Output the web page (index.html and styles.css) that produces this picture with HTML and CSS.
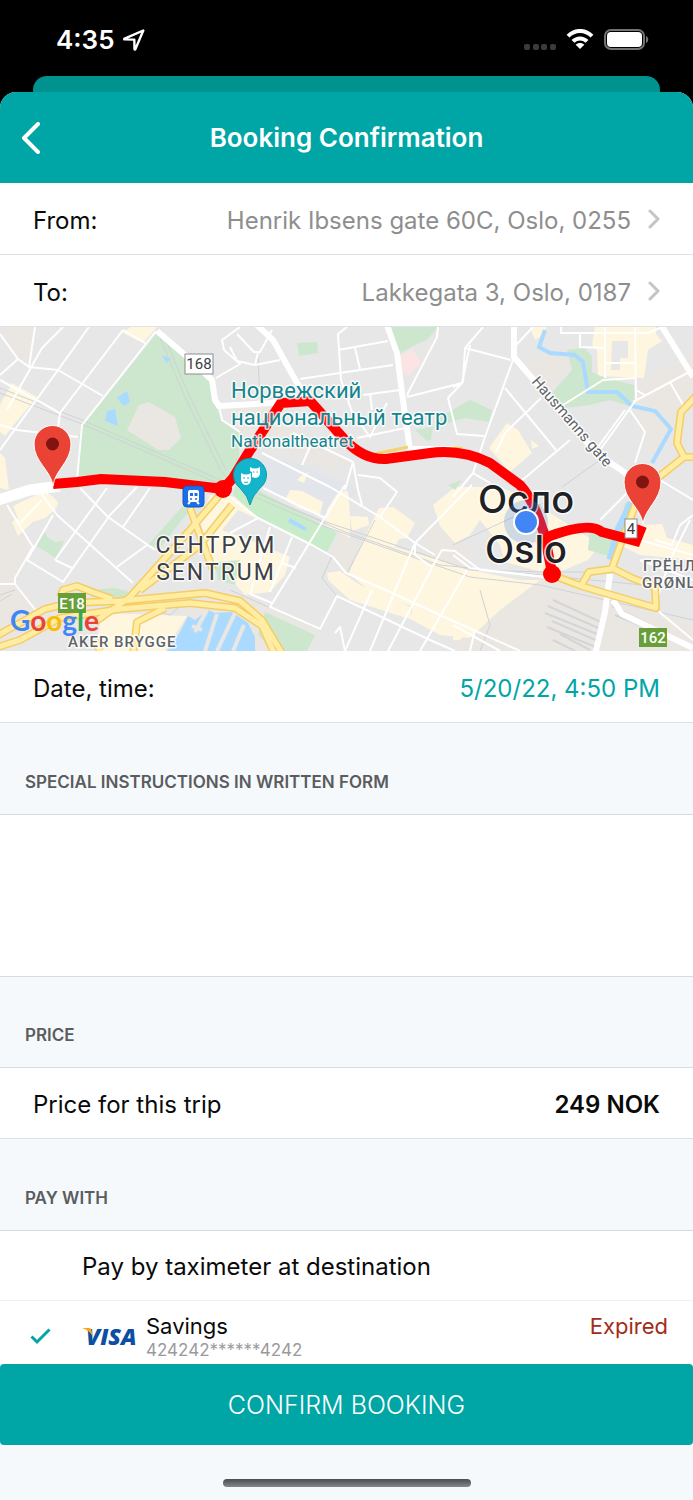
FILE: index.html
```html
<!DOCTYPE html>
<html lang="en">
<head>
    <meta charset="UTF-8">
    <meta name="viewport" content="width=device-width, initial-scale=1.0">
    <title>Booking Confirmation</title>
    <link rel="stylesheet" href="styles.css">
</head>
<body>
    <div class="status-bar">
        <div class="status-left">
            <span>4:35</span>
            <svg width="22" height="22" viewBox="0 0 22 22" fill="none" stroke="#fff" stroke-width="2.4" stroke-linejoin="round">
                <path d="M20.300 1.500L1.600 9.600C1 9.900 1.200 10.400 1.700 10.400L11.300 10.600L11.500 20C11.500 20.600 12.100 20.700 12.400 20.100Z"/>
            </svg>
        </div>
        <div class="status-right">
            <svg width="32" height="7" viewBox="0 0 32 7" fill="#3b3b3d">
                <rect x="0" width="6" height="6" rx="2"/>
                <rect x="9" width="6" height="6" rx="2"/>
                <rect x="17" width="6" height="6" rx="2"/>
                <rect x="26" width="6" height="6" rx="2"/>
            </svg>
            <svg class="wifi" width="28" height="22" viewBox="0 0 28 22" fill="none" stroke="#fff" stroke-width="4">
                <path d="M2 7.200C8.800 .2 19.200 .2 26 7.200"/>
                <path d="M7 12.400C11 8.400 17 8.400 21 12.400"/>
                <path d="M14 20L9.700 15.800C12 13.400 16 13.400 18.300 15.800Z" fill="#fff" stroke="none"/>
            </svg>
            <svg width="45" height="22" viewBox="0 0 45 22">
                <rect x="1" y="1" width="39" height="19" rx="6" fill="none" stroke="#747276" stroke-width="2"/>
                <rect x="3" y="3" width="35" height="15" rx="4" fill="#fff"/>
                <path d="M42 7C45 8 45 13 42 14Z" fill="#747276"/>
            </svg>
        </div>
    </div>
    <div class="sheet-back"></div>
    <div class="sheet">
        <header class="nav-bar">
            <button class="back" type="button" aria-label="Back">
                <svg width="20" height="32" viewBox="0 0 20 32" fill="none" stroke="#fff" stroke-width="4" stroke-linecap="round" stroke-linejoin="round">
                    <path d="M18 2L4 16L18 30"/>
                </svg>
            </button>
            <h1>Booking Confirmation</h1>
        </header>

        <main>
            <a class="row" href="#from">
                <span>From:</span>
                <span class="value">Henrik Ibsens gate 60C, Oslo, 0255</span>
                <svg class="chevron" width="13" height="20" viewBox="0 0 13 20"><path d="M3 2L11 10L3 18"/></svg>
            </a>
            <a class="row" href="#to">
                <span>To:</span>
                <span class="value">Lakkegata 3, Oslo, 0187</span>
                <svg class="chevron" width="13" height="20" viewBox="0 0 13 20"><path d="M3 2L11 10L3 18"/></svg>
            </a>

            <svg class="map" viewBox="0 327 693 324">
                <rect y="327" width="693" height="324" fill="#e7e7e7"/>

                <!-- plain ground -->
                <g fill="#eae7e3">
                    <path d="M3 327H35L29 367L18 359Z"/>
                    <path d="M0 505L12 505L33 547L15 580L50 620L0 651Z"/>
                    <path d="M219 405L262 400L300 432L352 462L330 470L240 432Z"/>
                    <path d="M453 580L545 577L610 590L693 625V651H453Z"/>
                    <path d="M340 532L360 545L346 574L332 556Z"/>
                    <path d="M560 350L570 370L541 395L522 365Z"/>
                    <path d="M638 380L693 355V400L672 428L652 463L632 408Z"/>
                    <path d="M185 600L260 600L320 628L310 651H180Z"/>
                    <path d="M413 376L427 345L438 335L407 395Z"/>
                    <path d="M420 520L470 545L465 572L430 560Z"/>
                </g>
                <path d="M262 455L302 465L360 490L345 500L330 520L258 488Z" fill="#e2e6ea"/>

                <!-- business areas -->
                <g fill="#fef6df">
                    <path d="M123 333L130 327H157L143 343Z"/>
                    <path d="M12 383L37 397L22 415L5 436L0 432V405Z"/>
                    <path d="M0 453L5 458L9 490L0 488Z"/>
                    <path d="M13 506L45 491L52 496L58 502L56 509L45 518L33 522L18 536L12 522L18 518Z"/>
                    <path d="M530 327H547L540 337L535 340Z"/>
                    <path d="M595 327H656V334L662 341L648 350L644 378L598 376L597 350L592 345Z"/>
                    <path d="M507 423L518 430L532 453L510 472L489 448Z"/>
                    <path d="M531 440L539 446L532 449Z"/>
                    <path d="M210 495L240 497L264 508L260 520L238 510L222 530L245 538L290 557L285 575L270 592L245 595L225 572L212 565L200 520Z"/>
                    <path d="M285 500L290 490L302 491L323 502L320 515L298 508Z"/>
                    <path d="M327 510L338 492L348 491L350 516L350 538L325 525Z"/>
                    <path d="M350 516L368 517L369 525L352 531Z"/>
                    <path d="M379 508L393 507L403 514L415 523L407 538L399 539L395 547L405 550L470 570L520 580L540 580L500 610L470 638L440 635L412 620L412 606L375 596L349 573L368 530Z"/>
                    <path d="M327 573L340 571L360 585L410 607L413 620L350 600L328 580Z"/>
                    <path d="M433 505L455 487H500L530 500L600 545L588 560L552 575L505 562L500 545L480 520L470 535L455 543L440 526Z"/>
                    <path d="M301 476L308 472L304 483L297 480Z"/>
                    <path d="M640 525L662 524L667 538L693 545V560L640 555L620 545Z"/>
                    <path d="M102 613L187 616L165 651H95Z"/>
                    <path d="M453 580L480 590L490 600L480 620L460 640L453 640Z"/>
                </g>
                <path d="M612 341H628V358H620V370H611Z" fill="#e7e7e7"/>

                <!-- parks -->
                <g fill="#cce7cd">
                    <path d="M157 333L190 360L213 385L216 407L222 421L240 434L238 470L222 485L100 478L77 475L80 430L82 427Z"/>
                    <path d="M297 343L317 342L318 353L299 356Z"/>
                    <path d="M391 327H438L427 340L413 346L399 354Z"/>
                    <path d="M438 418L452 410L470 400L492 410L489 422L465 418L440 425Z"/>
                    <path d="M415 430L433 427L431 440L427 441Z"/>
                    <path d="M567 350L585 348L592 357L592 372L605 378L634 385L635 408L610 400L590 405L563 408L550 395L572 370Z"/>
                    <path d="M35 545L45 532L48 538L55 542L64 541L56 558Z"/>
                    <path d="M148 545L182 507L192 507L160 548Z"/>
                    <path d="M92 590L115 588L133 593L120 598L92 597Z"/>
                    <path d="M215 562L240 560L235 585L218 580Z"/>
                    <path d="M265 612L315 635L307 651H275L258 635Z"/>
                    <path d="M590 530L612 540L608 556L588 550Z"/>
                    <path d="M625 503L636 500L630 520L620 528Z"/>
                    <path d="M448 485L462 480L455 490Z"/>
                </g>
                <path d="M240 470L258 490L337 533L327 552L260 520L233 495Z" fill="#c8ecc9"/>
                <path d="M400 356L412 349L421 363L408 376L400 370Z" fill="#fce4e4"/>
                <path d="M149 402L175 417L181 438L169 450H158L127 430L139 405Z" fill="#eae7e3"/>

                <!-- water -->
                <g fill="#aadaff">
                    <path d="M162 355L171 359L166 363Z"/>
                    <path d="M127 391L130 402L124 406L117 398Z"/>
                    <path d="M115 409L118 426L105 421L107 411Z"/>
                    <path d="M290 518L307 528L305 531L288 522Z"/>
                    <path d="M188 616L195 620L208 610L215 613L232 612L248 623L255 637V651H167L180 632Z"/>
                </g>
                <path d="M545 330L539 347L550 353L575 355L583 362L588 392H617L632 406L655 411L671 429L652 463" fill="none" stroke="#aadaff" stroke-width="4"/>
                <path d="M632 503L619 530L611 560" fill="none" stroke="#aadaff" stroke-width="9"/>
                <path d="M195 632L207 610M205 651L217 614M217 651L235 613M233 651L244 625M192 626L202 630" stroke="#eae7e3" stroke-width="4"/>

                <!-- rail lines -->
                <g fill="none" stroke="#cfd2d5">
                    <path d="M0 388L82 420L225 482M0 393L82 424L220 484"/>
                    <path d="M160 338L184 395L222 473L245 490M165 338L188 393L226 470"/>
                    <path d="M245 488L320 520L470 570L545 572H590M245 493L320 525L470 577L540 585L693 620M250 490L340 530L440 565L693 590"/>
                    <path d="M258 357L260 400M375 520L346 575M332 556L322 578L336 595M562 487L600 460M550 500L453 545M480 590L490 625L480 651"/>
                    <path d="M230 590L320 630M120 600L170 615L200 590L240 600"/>
                    <path d="M0 595L15 590M0 601L12 594"/>
                </g>
                <g fill="none" stroke="#d3d5d8" stroke-width="2">
                    <path d="M553 600L605 624M548 606L603 630M545 613L602 636M552 621L600 642M547 627L598 648M560 634L590 650M553 640L575 651M612 606L650 625M615 615L693 648"/>
                </g>

                <!-- streets -->
                <g class="street">
                    <path d="M0 334L18 359L29 367L58 370L103 396M35 327L29 367M63 327L42 348L7 410M89 327L58 370L0 450M123 330L60 413L58 427M0 380L60 413M0 425L17 430L78 437M18 359L0 375M123 330L145 343"/>
                    <path d="M156 331L82 425L77 480"/>
                    <path d="M240 327L222 340L224 350L240 364L216 378M219 405L222 420L240 432"/>
                    <path d="M230 347L237 361L255 365L280 360M237 334L254 352H260L272 330M255 365L258 352"/>
                    <path d="M347 327L338 334L341 380L352 412L370 437L387 403M300 379L393 365M338 350L388 341M355 348L360 369M363 395L400 390M370 393L372 410M357 438L410 427"/>
                    <path d="M438 327L437 337L407 395M407 397L462 383L470 345M462 383L448 398L457 434L484 436"/>
                    <path d="M293 433L353 462L358 490L362 505M353 462L345 490M262 453L302 473L330 487M358 475L380 478L397 492L380 517M313 440L302 465"/>
                    <path d="M483 327L465 348L511 360M465 348L463 382L453 387M513 360L485 437L473 473L453 497M505 388L556 450M541 398L505 433L496 452M563 405L603 380L635 378M570 440L520 482M516 345L533 327"/>
                    <path d="M561 327V333H648L660 328M580 333V347L605 348M605 327V378M635 327L636 400L600 450M605 363H635M625 410L598 447M633 402L693 370M670 382L683 405M630 410L645 432L635 463M636 390L645 395"/>
                    <path d="M473 473L490 483M660 480L693 500M600 520L640 480"/>
                    <path d="M7 505L33 547L15 578V584L37 612M0 584H15M40 492L57 515L133 583M53 515L27 560L63 582L110 515L137 487M55 560L72 568M55 560L107 488M80 488L108 517L155 550M117 567L147 545M123 527L150 488M20 523L42 500"/>
                    <path d="M230 497L258 518L312 545L333 557L346 573L390 592L440 615L520 651M263 488L325 518M345 485L270 607L320 629L337 596L430 640L455 651M330 487L380 517L415 543L435 555M472 485L415 543L370 651M432 568L388 651M372 590L345 651M467 570L420 651M415 543V555L432 567L442 550L455 551L480 570L545 577M230 533L258 518M270 527L250 594M292 537L270 592M282 563L296 568M250 594L272 603M335 633L340 627L345 651"/>
                    <path d="M453 555L470 568L545 577M657 610L693 640M640 560L693 580M690 520L670 560L655 605M640 540L693 555M655 540L672 545L680 525L693 515M453 625L500 651M475 630L470 651"/>
                </g>
                <g class="main-road">
                    <path d="M157 331L185 355L212 380L215 400L219 406L290 402"/>
                    <path d="M257 325L273 340L297 383L310 402"/>
                    <path d="M387 325L397 353L402 393L410 450"/>
                    <path d="M514 325V357L596 453L640 483"/>
                    <path d="M661 325L693 377"/>
                    <path d="M408 449L455 449"/>
                    <path d="M610 574L605 612L595 655"/>
                    <path d="M613 600L622 614L693 648"/>
                </g>
                <path d="M-5 501L30 490L60 486" fill="none" stroke="#fff" stroke-width="11"/>

                <!-- highways: dark edge first, then the fill -->
                <g class="highway-edge">
                    <path id="highway-west" d="M-5 637L45 609L70 603L120 601L205 593L240 601L262 620L283 655M-5 648L20 640L60 618L120 609L190 603L235 608L262 626L275 655"/>
                    <path id="highway-diagonal" d="M95 622L130 597L190 530L224 490M190 508L198 530L213 570M140 590L200 545L232 505M60 597L63 590L77 586L95 593L112 599M100 651L95 640M133 655L137 622L165 608"/>
                    <path id="highway-east" d="M700 392L681 412L677 443L684 457H700M684 457L640 492L612 568L632 578L655 587L656 608L581 586L552 575M581 586L589 572L612 569"/>
                </g>
                <g class="highway">
                    <use href="#highway-west"/>
                    <use href="#highway-diagonal"/>
                    <use href="#highway-east"/>
                </g>
                <path d="M375 454L408 447M434 449L462 448" stroke="#f7d16b" stroke-width="3"/>

                <!-- route -->
                <g class="route">
                    <path d="M53 484L77 482L101 479L165 482L223 489L233 478L247 455L281 403L310 401L345 440Q364 460 386 459L430 453Q462 449 490 463L520 485Q534 500 545 537L552 573"/>
                    <path d="M545 538Q588 521 602 532L636 541L642 526"/>
                </g>
                <circle cx="223" cy="489" r="9" fill="#f00"/>
                <circle cx="552" cy="574" r="9" fill="#f00"/>

                <!-- road shields -->
                <rect x="185" y="354" width="28" height="20" fill="#fff" stroke="#8b8d90"/>
                <text class="shield dark" x="199" y="369">168</text>
                <rect x="625" y="519" width="12" height="19" fill="#fff" stroke="#8b8d90"/>
                <text class="shield dark" x="631" y="534">4</text>
                <rect x="58" y="593" width="28" height="20" fill="#689f38"/>
                <text class="shield" x="72" y="609">E18</text>
                <rect x="639" y="628" width="28" height="19" fill="#689f38"/>
                <text class="shield" x="653" y="643">162</text>

                <!-- station -->
                <rect x="183" y="486" width="21" height="21" rx="4" fill="#1a6fe8" stroke="#1558c0"/>
                <path d="M190 490H197Q199 490 199 492V500Q199 502 197 502H190Q188 502 188 500V492Q188 490 190 490ZM190 493V496H193V493ZM194.500 493V496H197.500V493Z" fill="#fff" fill-rule="evenodd"/>
                <path d="M190 502L188 504M197 502L199 504" stroke="#fff" stroke-width="2"/>
                <circle cx="191" cy="499" r="1" fill="#1a6fe8"/>
                <circle cx="196" cy="499" r="1" fill="#1a6fe8"/>

                <!-- theatre -->
                <path d="M250 505Q248 496 240 488A16.500 16.500 0 1 1 260 488Q252 496 250 505Z" fill="#12b5cb" stroke="#0e98ac"/>
                <path d="M241 473Q246 476 251 473V480Q250 485 246 485Q242 485 241 480Z" fill="#fff"/>
                <path d="M250 467Q255 470 260 467V474Q259 478 255 478L252 477V472L250 471Z" fill="#fff"/>
                <path d="M243 478H245M247 478H249M253 472H254.500M256.500 472H258M244 482Q246 483 248 482" stroke="#12b5cb" fill="none"/>

                <!-- place names -->
                <text class="label poi" x="231" y="398">Норвежский</text>
                <text class="label poi" x="231" y="425">национальный театр</text>
                <text class="label poi small" x="231" y="447">Nationaltheatret</text>
                <text class="label district" x="216" y="553">СЕНТРУМ</text>
                <text class="label district" x="216" y="580">SENTRUM</text>
                <text class="label area" x="68" y="647">AKER BRYGGE</text>
                <text class="label area" x="643" y="571">ГРЁНЛАНД</text>
                <text class="label area" x="642" y="588">GRØNLAND</text>
                <text class="label road" transform="translate(531 382) rotate(49)">Hausmanns gate</text>
                <text class="label city" x="526" y="513">Осло</text>
                <circle cx="526" cy="522" r="22" fill="#4285f4" opacity="0.25"/>
                <text class="label city" x="526" y="563">Oslo</text>
                <circle cx="526" cy="522" r="12" fill="#4285f4" stroke="#fff" stroke-width="2"/>

                <!-- markers -->
                <g id="marker">
                    <path d="M53 486C51 470 34 462 34 444A18.500 18.500 0 0 1 71 444C71 462 55 470 53 486Z" fill="#ea4335" stroke="#fff"/>
                    <circle cx="52.500" cy="444" r="6.500" fill="#811411"/>
                </g>
                <use href="#marker" x="590" y="38"/>

                <text class="google" x="10" y="631"><tspan fill="#4285f4">G</tspan><tspan fill="#ea4335">o</tspan><tspan fill="#fbbc05">o</tspan><tspan fill="#4285f4">g</tspan><tspan fill="#34a853">l</tspan><tspan fill="#ea4335">e</tspan></text>
            </svg>

            <div class="row">
                <span>Date, time:</span>
                <span class="value date">5/20/22, 4:50 PM</span>
            </div>

            <label class="section-title" for="instructions">SPECIAL INSTRUCTIONS IN WRITTEN FORM</label>
            <textarea class="instructions" id="instructions"></textarea>

            <h2 class="section-title">PRICE</h2>
            <div class="row price-row">
                <span>Price for this trip</span>
                <span class="value price">249 NOK</span>
            </div>

            <h2 class="section-title">PAY WITH</h2>
            <label class="row pay">
                <input type="radio" name="pay">
                <span>Pay by taximeter at destination</span>
            </label>
            <label class="card">
                <input type="radio" name="pay" checked>
                <svg class="check" width="21" height="17" viewBox="0 0 21 17" fill="none" stroke="#00a6a6" stroke-width="3"><path d="M1.500 8.500L7 14L19.500 1.500"/></svg>
                <svg class="visa" width="58" height="20" viewBox="0 0 58 20">
                    <text x="4" y="18">VISA</text>
                    <path d="M0 1H7Q9 1 9.500 3L10.500 9Q7 3 0 1Z" fill="#f9a51a"/>
                </svg>
                <span class="card-info">
                    <span class="card-name">Savings</span>
                    <span class="card-number">424242******4242</span>
                </span>
                <span class="expired">Expired</span>
            </label>
        </main>

        <footer>
            <button class="confirm" type="button">CONFIRM BOOKING</button>
            <div class="home-indicator"></div>
        </footer>
    </div>
</body>
</html>
```
FILE: styles.css
```css
* {
    box-sizing: border-box;
}
body {
    margin: 0;
    background: #000;
    color: #0a0a0a;
    font-family: Inter, "Noto Sans", sans-serif;
    font-size: 24px;
    line-height: 30px;
}

/* Status bar */
.status-bar {
    display: flex;
    align-items: center;
    justify-content: space-between;
    height: 76px;
    padding: 4px 44px 0 56px;
    color: #fff;
}
.status-left,
.status-right {
    display: flex;
    align-items: center;
    gap: 8px;
}
.status-left {
    font-size: 26px;
    font-weight: 600;
}
.status-right {
    align-items: flex-end;
    gap: 10px;
}

/* Sheets */
.sheet-back {
    height: 16px;
    margin: 0 33px;
    background: #00928f;
    border-radius: 14px 14px 0 0;
}
.sheet {
    background: #f5f9fb;
    border-radius: 16px 16px 0 0;
    overflow: hidden;
}
.nav-bar {
    display: grid;
    grid-template-columns: 60px 1fr 60px;
    align-items: center;
    height: 91px;
    background: #00a6a6;
    color: #fff;
}
.nav-bar h1 {
    margin: 0;
    text-align: center;
    font-size: 26px;
    font-weight: 600;
}
.back {
    display: flex;
    padding: 0 0 0 20px;
    border: none;
    background: none;
}

/* Rows */
.row {
    display: flex;
    align-items: center;
    height: 72px;
    padding: 4px 33px 0;
    background: #fff;
    border-bottom: 1px solid #dfe1e2;
    color: inherit;
    text-decoration: none;
}
.value {
    flex: 1;
    text-align: right;
    color: #8e8e8e;
}
.chevron {
    margin: 0 0 4px 16px;
    fill: none;
    stroke: #c4c4c6;
    stroke-width: 3;
    stroke-linecap: round;
    stroke-linejoin: round;
}
.date {
    color: #00a6a6;
}
.price-row {
    height: 71px;
}
.price {
    color: #0a0a0a;
    font-weight: 600;
}
.section-title {
    display: flex;
    align-items: flex-end;
    height: 92px;
    margin: 0;
    padding: 0 25px 22px;
    border-bottom: 1px solid #d9dcde;
    color: #5a5c5e;
    font-size: 17px;
    font-weight: 600;
    line-height: 20px;
}
.instructions {
    display: block;
    width: 100%;
    height: 162px;
    padding: 16px 33px;
    border: none;
    border-bottom: 1px solid #d9dcde;
    background: #fff;
    font: inherit;
    resize: none;
}
.instructions + .section-title {
    height: 91px;
}

/* Map */
.map {
    display: block;
    width: 100%;
    height: auto;
}
.street,
.main-road,
.highway,
.highway-edge,
.route {
    fill: none;
    stroke: #fff;
    stroke-linejoin: round;
}
.street {
    stroke-width: 2;
}
.main-road {
    stroke-width: 6;
}
.highway {
    stroke: #ffeda3;
    stroke-width: 5;
}
.highway-edge {
    stroke: #f6cd65;
    stroke-width: 8;
}
.route {
    stroke: #f00;
    stroke-width: 10;
    stroke-linejoin: miter;
}
.label {
    fill: #5f6368;
    stroke: #fff;
    stroke-width: 3;
    stroke-linejoin: round;
    stroke-opacity: 0.8;
    paint-order: stroke;
    font-family: Roboto, sans-serif;
}
.poi {
    fill: #12858e;
    font-size: 22px;
}
.small {
    font-size: 17px;
}
.district {
    fill: #3c4043;
    font-size: 23px;
    letter-spacing: 2px;
    text-anchor: middle;
}
.area {
    font-size: 15px;
    font-weight: 500;
    letter-spacing: 1px;
}
.road {
    font-size: 15px;
}
.city {
    fill: #202124;
    font-family: Inter, sans-serif;
    font-size: 38px;
    font-weight: 500;
    text-anchor: middle;
}
.shield {
    fill: #fff;
    font-family: Roboto, sans-serif;
    font-size: 15px;
    font-weight: 500;
    text-anchor: middle;
}
.shield.dark {
    fill: #3c4043;
    font-weight: 400;
}
.google {
    font-family: Lato, sans-serif;
    font-size: 28px;
    font-weight: 700;
}

/* Payment */
.pay input,
.card input {
    appearance: none;
    width: 0;
    height: 0;
    margin: 0;
}
.pay {
    height: 70px;
    padding: 2px 33px 0 82px;
    border-color: #f0f0f0;
}
.card {
    display: flex;
    align-items: center;
    height: 63px;
    padding: 0 25px 0 30px;
    background: #fff;
}
.check {
    margin: 8px 31px 0 0;
}
.visa {
    margin: 8px 6px 0 0;
}
.visa text {
    fill: #0b4ea2;
    font-family: "Open Sans", sans-serif;
    font-size: 23px;
    font-style: italic;
    font-weight: 800;
}
.card-info {
    display: flex;
    flex: 1;
    flex-direction: column;
    padding-top: 8px;
}
.card-name,
.expired {
    font-size: 22px;
    line-height: 26px;
}
.card-number {
    color: #9a9a9c;
    font-size: 17px;
    line-height: 22px;
}
.expired {
    align-self: flex-start;
    padding-top: 12px;
    color: #a32c18;
}

/* Footer */
.confirm {
    display: block;
    width: 100%;
    height: 81px;
    border: none;
    border-radius: 4px;
    background: #00a6a6;
    color: #fff;
    font-family: inherit;
    font-size: 25px;
    font-weight: 300;
}
.home-indicator {
    width: 248px;
    height: 8px;
    margin: 34px auto 14px;
    border-radius: 4px;
    background: linear-gradient(#4a4d4e, #858788);
}
```
